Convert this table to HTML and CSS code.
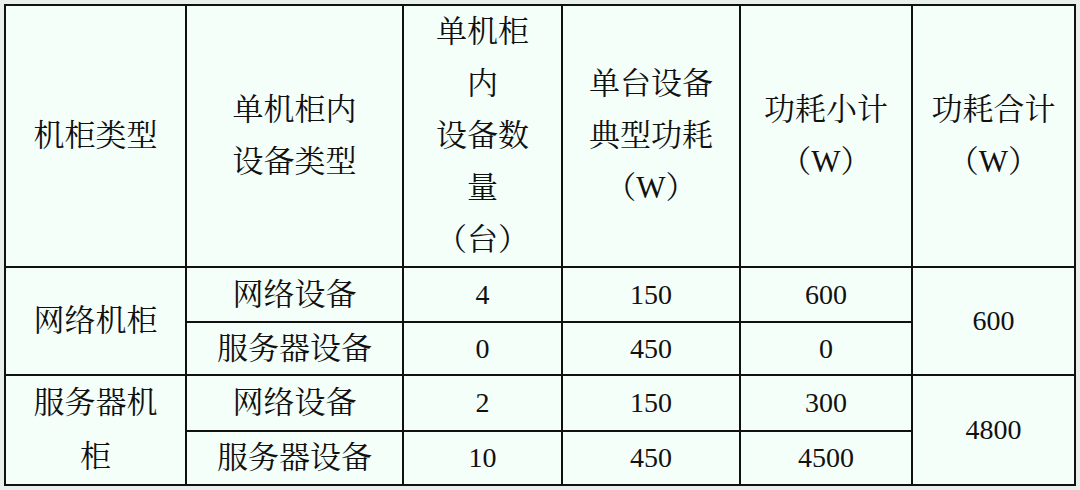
FILE: index.html
```html
<!DOCTYPE html>
<html lang="zh-CN">
<head>
<meta charset="utf-8">
<title>机柜功耗</title>
<link rel="stylesheet" href="styles.css">
</head>
<body>
<table class="power">
  <colgroup>
    <col class="c1"><col class="c2"><col class="c3"><col class="c4"><col class="c5"><col class="c6">
  </colgroup>
  <tr class="head">
    <th>机柜类型</th>
    <th>单机柜内<br>设备类型</th>
    <th>单机柜<br>内<br>设备数<br>量<br>（台）</th>
    <th>单台设备<br>典型功耗<br>（W）</th>
    <th>功耗小计<br>（W）</th>
    <th>功耗合计<br>（W）</th>
  </tr>
  <tr class="r1">
    <td rowspan="2">网络机柜</td>
    <td>网络设备</td>
    <td class="num">4</td>
    <td class="num">150</td>
    <td class="num">600</td>
    <td rowspan="2" class="num">600</td>
  </tr>
  <tr class="r2">
    <td>服务器设备</td>
    <td class="num">0</td>
    <td class="num">450</td>
    <td class="num">0</td>
  </tr>
  <tr class="r3">
    <td rowspan="2" class="multi">服务器机<br>柜</td>
    <td>网络设备</td>
    <td class="num">2</td>
    <td class="num">150</td>
    <td class="num">300</td>
    <td rowspan="2" class="num">4800</td>
  </tr>
  <tr class="r4">
    <td>服务器设备</td>
    <td class="num">10</td>
    <td class="num">450</td>
    <td class="num">4500</td>
  </tr>
</table>
</body>
</html>
```

FILE: styles.css
```css
html, body {
  margin: 0;
  padding: 0;
  background: #e9f0ec;
}
body {
  padding: 4px;
}
.power {
  border-collapse: collapse;
  table-layout: fixed;
  width: 1072px;
  background: #f5fffa;
  color: #111;
  font-family: "Liberation Serif", "Noto Serif CJK SC", "Noto Sans CJK SC", serif;
  font-size: 31px;
  border: 2px solid #111;
}
.c1 { width: 181px; }
.c2 { width: 217px; }
.c3 { width: 159px; }
.c4 { width: 178px; }
.c5 { width: 172px; }
.c6 { width: 163px; }
.power th,
.power td {
  border: 2px solid #111;
  padding: 0;
  text-align: center;
  vertical-align: middle;
  font-weight: normal;
  line-height: 48px;
}
.power th {
  line-height: 52px;
}
.head { height: 262px; }
.r1 { height: 55px; }
.r2 { height: 53px; }
.r3 { height: 55px; }
.r4 { height: 54px; }
.power td.num {
  font-size: 28px;
}
.power td.multi {
  line-height: 54px;
}
```
